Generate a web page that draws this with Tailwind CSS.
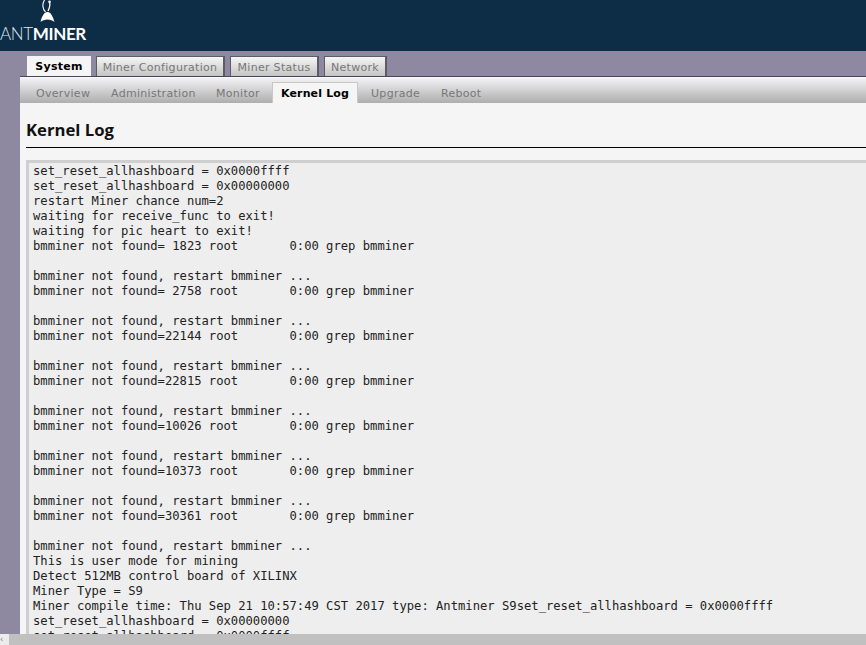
<!DOCTYPE html>
<html>
<head>
<meta charset="utf-8">
<script src="https://cdn.jsdelivr.net/npm/@tailwindcss/browser@4"></script>
</head>
<body class="w-[866px] h-[645px] overflow-hidden bg-[#8e88a0] font-['DejaVu_Sans',sans-serif]">
<div class="h-[634px] overflow-hidden">
  <header class="h-[51px] bg-[#0d2c45] relative overflow-hidden">
    <svg class="absolute left-[40px] top-0" width="16" height="24" viewBox="0 0 16 24" fill="none">
      <path d="M4.5 0 C2 4 2.5 9 5.5 12" stroke="#fff" stroke-width="1.1"/>
      <path d="M9.5 2 C10.5 5 9.5 8 8 11" stroke="#fff" stroke-width="1.3"/>
      <circle cx="9.5" cy="1.8" r="1.3" fill="#fff"/>
      <path d="M7.5 12 C11 12 13 17 14.5 22 C11 18.5 4 18.5 0.5 22 C1.5 17 4 12 7.5 12Z" fill="#fff"/>
    </svg>
    <div class="absolute left-0 top-[23px] text-[17px] leading-[21px] tracking-[-0.35px] text-[#dfe5ea] font-['Lato',sans-serif] whitespace-nowrap"><span class="font-light">ANT</span><span class="font-bold text-white">MINER</span></div>
  </header>
  <nav class="h-[25px] flex items-end pl-[27px] gap-[5px] text-[11px] text-[#777] tracking-[0.3px]">
    <div class="w-[64px] h-[20px] bg-[#f5f5f5] text-center leading-[22px] font-bold text-black">System</div>
    <div class="w-[129px] h-[20px] border-l border-t border-r-2 border-[#5c5c66] bg-gradient-to-b from-[#f6f6f6] to-[#c4c4c4] text-center leading-[21px]">Miner Configuration</div>
    <div class="w-[89px] h-[20px] border-l border-t border-r-2 border-[#5c5c66] bg-gradient-to-b from-[#f6f6f6] to-[#c4c4c4] text-center leading-[21px]">Miner Status</div>
    <div class="w-[63px] h-[20px] border-l border-t border-r-2 border-[#5c5c66] bg-gradient-to-b from-[#f6f6f6] to-[#c4c4c4] text-center leading-[21px]">Network</div>
  </nav>
  <main class="ml-[20px] h-[558px] border-t border-[#4a4658] bg-[#f5f5f5] overflow-hidden">
    <div class="h-[26px] flex items-end pl-[16px] bg-gradient-to-b from-[#f3f3f5] to-[#aeaeae] text-[11px] text-[#777] tracking-[0.3px] border-t border-[#f8f8fb]">
      <span class="w-[75px] h-[21px] leading-[23px]">Overview</span>
      <span class="w-[105px] h-[21px] leading-[23px]">Administration</span>
      <span class="w-[56px] h-[21px] leading-[23px]">Monitor</span>
      <span class="w-[86px] h-[21px] leading-[22px] bg-[#f5f5f5] border-l border-t border-r border-[#c8c8c8] text-center font-bold text-black tracking-[0.15px]">Kernel Log</span>
      <span class="ml-[13px] w-[70px] h-[21px] leading-[23px]">Upgrade</span>
      <span class="h-[21px] leading-[23px]">Reboot</span>
    </div>
    <div class="pl-[6px]">
      <h1 class="h-[45px] pt-[16px] border-b border-black text-[16.7px] leading-[21px] font-bold text-[#111] font-['Open_Sans',sans-serif]">Kernel Log</h1>
      <pre class="mt-[12px] h-[480px] border-l-[3px] border-t-[3px] border-[#cfcfcf] bg-[#eeeeee] pl-[4px] pt-[1px] font-['DejaVu_Sans_Mono',monospace] text-[12.18px] leading-[15px] text-[#222] whitespace-pre overflow-hidden">set_reset_allhashboard = 0x0000ffff
set_reset_allhashboard = 0x00000000
restart Miner chance num=2
waiting for receive_func to exit!
waiting for pic heart to exit!
bmminer not found= 1823 root       0:00 grep bmminer

bmminer not found, restart bmminer ...
bmminer not found= 2758 root       0:00 grep bmminer

bmminer not found, restart bmminer ...
bmminer not found=22144 root       0:00 grep bmminer

bmminer not found, restart bmminer ...
bmminer not found=22815 root       0:00 grep bmminer

bmminer not found, restart bmminer ...
bmminer not found=10026 root       0:00 grep bmminer

bmminer not found, restart bmminer ...
bmminer not found=10373 root       0:00 grep bmminer

bmminer not found, restart bmminer ...
bmminer not found=30361 root       0:00 grep bmminer

bmminer not found, restart bmminer ...
This is user mode for mining
Detect 512MB control board of XILINX
Miner Type = S9
Miner compile time: Thu Sep 21 10:57:49 CST 2017 type: Antminer S9set_reset_allhashboard = 0x0000ffff
set_reset_allhashboard = 0x00000000
set_reset_allhashboard = 0x0000ffff</pre>
    </div>
  </main>
</div>
<div class="h-[11px] bg-[#c0c0c0] flex"><div class="w-[9px] bg-[#ececec] text-[8px] leading-[11px] text-[#777]">‹</div></div>
</body>
</html>
